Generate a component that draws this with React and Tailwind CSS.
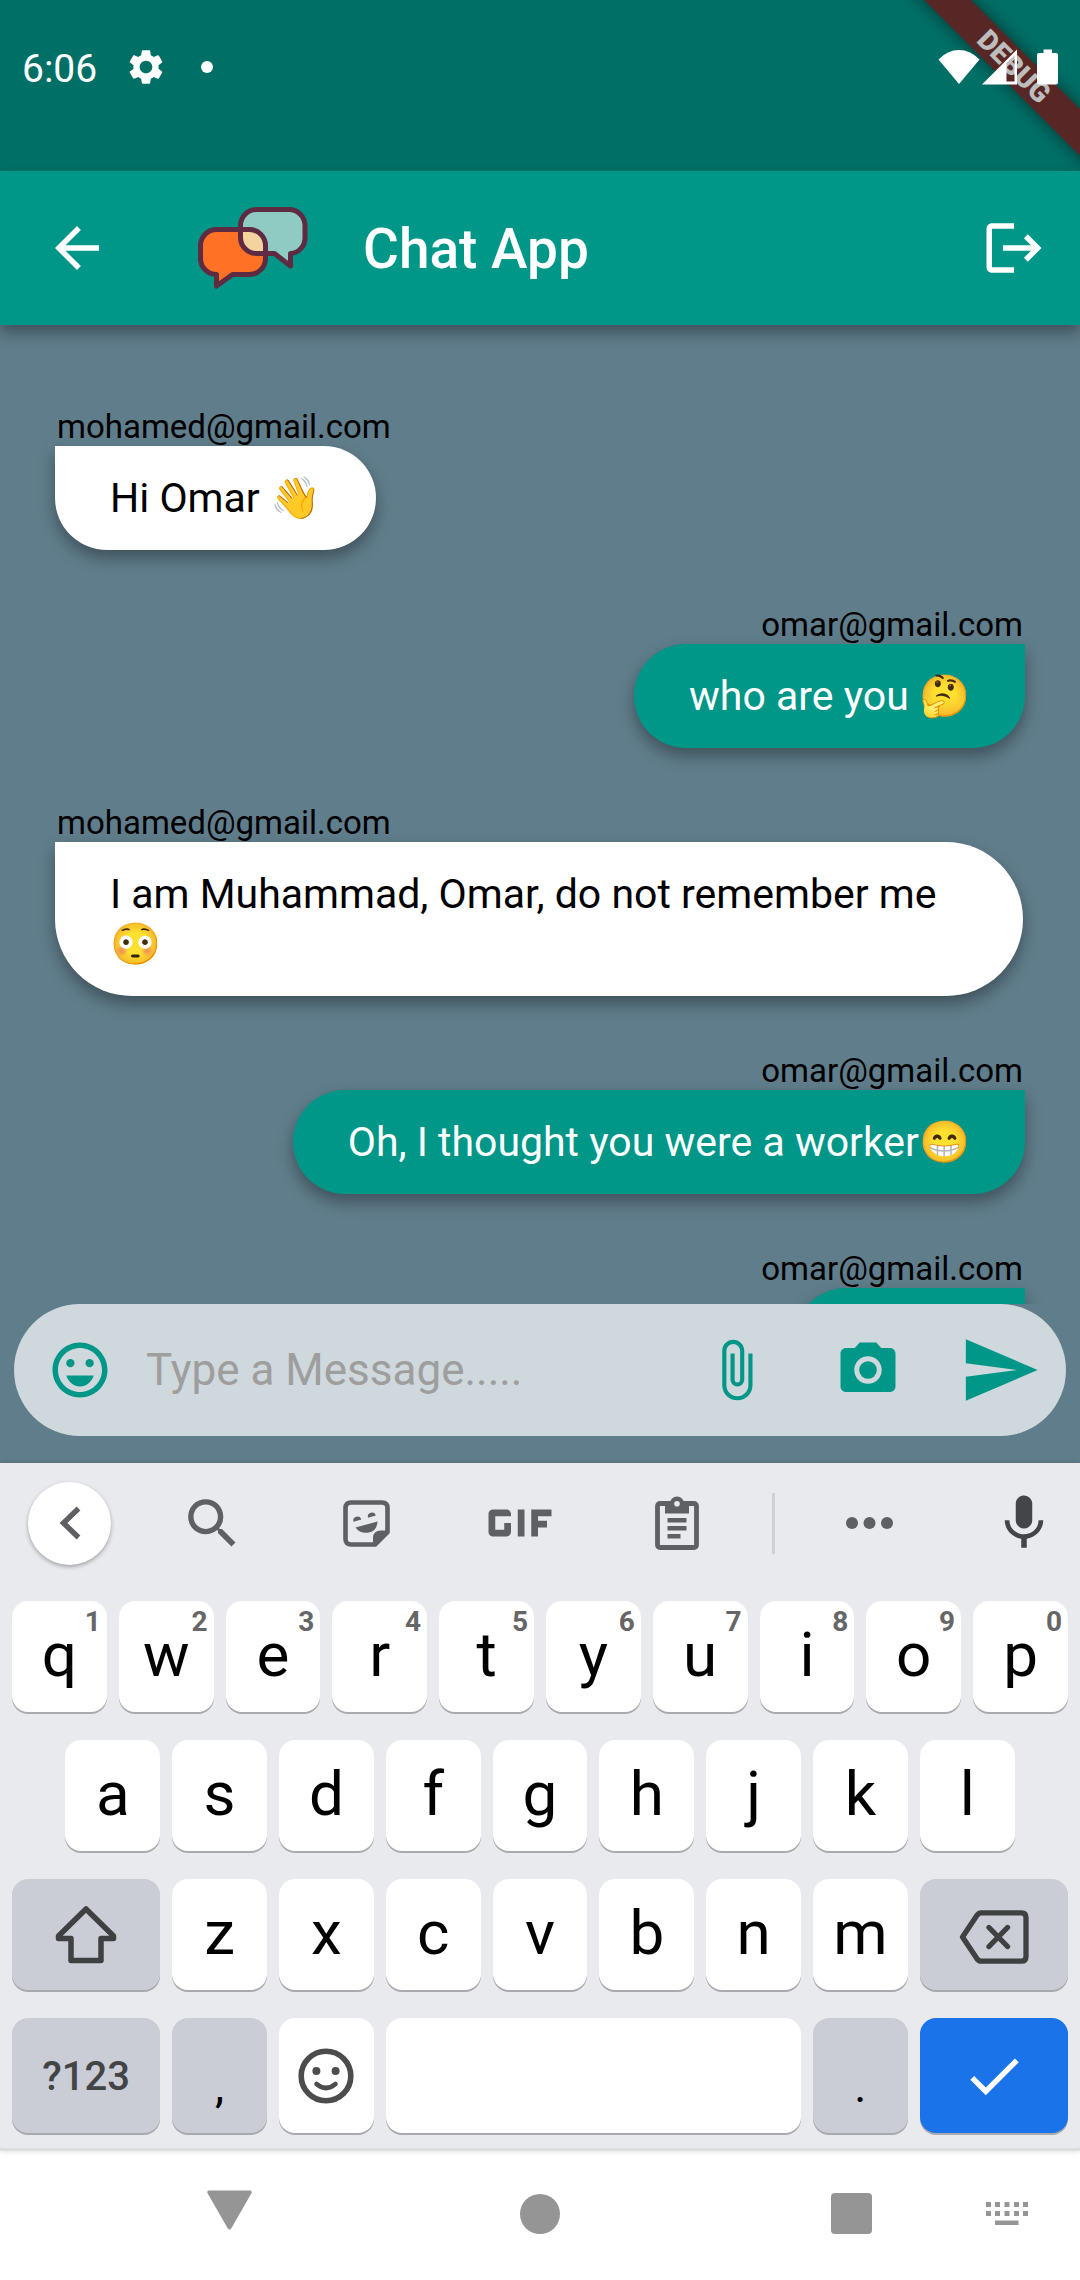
import React from "react";
import {
  MdArrowBack,
  MdAttachFile,
  MdDone,
  MdGif,
  MdLogout,
  MdMic,
  MdOutlineEmojiEmotions,
  MdPhotoCamera,
  MdSearch,
  MdSend,
  MdSettings,
} from "react-icons/md";

const MESSAGES = [
  { id: 1, from: "mohamed@gmail.com", text: "Hi Omar 👋", mine: false },
  { id: 2, from: "omar@gmail.com", text: "who are you 🤔", mine: true },
  { id: 3, from: "mohamed@gmail.com", text: "I am Muhammad, Omar, do not remember me 😳", mine: false },
  { id: 4, from: "omar@gmail.com", text: "Oh, I thought you were a worker😁", mine: true },
  { id: 5, from: "omar@gmail.com", text: "", mine: true },
];

const ROW_1 = ["q", "w", "e", "r", "t", "y", "u", "i", "o", "p"];
const ROW_2 = ["a", "s", "d", "f", "g", "h", "j", "k", "l"];
const ROW_3 = ["z", "x", "c", "v", "b", "n", "m"];

function StatusBar() {
  return (
    <div className="relative h-[171px] shrink-0 overflow-hidden bg-[#007066]">
      <div className="absolute -right-[86px] top-[50px] flex h-[33px] w-[304px] rotate-45 items-center justify-center bg-[#582725] text-[28px] font-black leading-[33px] text-[#bdbdbd] shadow-[0_0_18px_rgba(0,0,0,0.55)]">
        DEBUG
      </div>
      <div className="relative flex h-[134px] items-center pl-[22px] pr-[22px] text-white">
        <span className="pt-1 text-[39px] leading-none">6:06</span>
        <MdSettings className="ml-[28px] size-[42px]" />
        <span className="ml-[34px] size-3 rounded-full bg-white" />
        <svg className="ml-auto h-[36px] w-[42px]" viewBox="0 0 42 36" fill="currentColor">
          <path d="M21 35 0.5 10.5Q9.5 1 21 1t20.500 9.500z" />
        </svg>
        <svg className="ml-[2px] h-[36px] w-[36px]" viewBox="0 0 36 36" fill="none">
          <path d="M0 35.500 35 0.500V35.500z M24.500 14V32.500H32.500V6.500z" fill="currentColor" fillRule="evenodd" />
        </svg>
        <svg className="ml-[19px] h-[36px] w-[21px]" viewBox="0 0 21 36" fill="currentColor">
          <path d="M6.500 0.500h8.500v3.500h4q2 0 2 2v27.500q0 2-2 2H2q-2 0-2-2V6q0-2 2-2h4.500z" />
        </svg>
      </div>
    </div>
  );
}

const BACK_BUBBLE =
  "M58.500 2.500H91a16 16 0 0 1 16 16V31a15.500 15.500 0 0 1-14.500 15.500V59L76.500 46.500H58.500a16 16 0 0 1-16-16V18.500a16 16 0 0 1 16-16z";
const FRONT_BUBBLE =
  "M18.500 22.500H51.500a16 16 0 0 1 16 16V51.500a16 16 0 0 1-16 16H34.500L18.500 79V67.500A16 16 0 0 1 2.500 51.500V38.500a16 16 0 0 1 16-16z";

function Logo() {
  return (
    <svg className="h-[82px] w-[110px]" viewBox="0 0 110 82" fill="none" aria-hidden="true">
      <clipPath id="overlap">
        <path d={BACK_BUBBLE} />
      </clipPath>
      <path d={BACK_BUBBLE} fill="#8fcac3" />
      <path d={FRONT_BUBBLE} fill="#ff7226" />
      <path d={FRONT_BUBBLE} fill="#f3d49f" clipPath="url(#overlap)" />
      <path d={BACK_BUBBLE} stroke="#5f2b43" strokeWidth="5" strokeLinejoin="round" />
      <path d={FRONT_BUBBLE} stroke="#5f2b43" strokeWidth="5" strokeLinejoin="round" />
    </svg>
  );
}

function AppBar() {
  return (
    <header className="relative z-10 flex h-[154px] shrink-0 items-center bg-[#009688] pl-[44px] pr-[33px] text-white shadow-[0_8px_14px_rgba(0,0,0,0.35)]">
      <button type="button" aria-label="Back">
        <MdArrowBack className="size-[66px]" />
      </button>
      <div className="ml-[88px]">
        <Logo />
      </div>
      <h1 className="ml-[55px] pt-[3px] text-[55px] font-medium leading-none">Chat App</h1>
      <button type="button" aria-label="Log out" className="ml-auto">
        <MdLogout className="size-[66px]" />
      </button>
    </header>
  );
}

function Message({ from, text, mine }) {
  return (
    <li className={mine ? "flex flex-col items-end" : "flex flex-col items-start pr-0.5"}>
      <span className="px-0.5 text-[33px] leading-[39px] text-black">{from}</span>
      <p
        className={
          "min-h-[104px] min-w-[231px] px-[55px] py-[27px] text-[41px] leading-[50px] shadow-[0_8px_16px_rgba(0,0,0,0.35)] " +
          (mine
            ? "rounded-l-[82px] rounded-br-[82px] bg-[#009688] text-white"
            : "rounded-r-[82px] rounded-bl-[82px] bg-white text-black")
        }
      >
        {text}
      </p>
    </li>
  );
}

function Composer() {
  return (
    <form
      className="mx-[14px] mb-[27px] flex h-[132px] shrink-0 items-center rounded-full bg-[#cfd8dc] pl-[33px] pr-[25px] text-[#009688]"
      onSubmit={(e) => e.preventDefault()}
    >
      <button type="button" aria-label="Emoji">
        <MdOutlineEmojiEmotions className="size-[66px]" />
      </button>
      <input
        type="text"
        aria-label="Message"
        placeholder="Type a Message....."
        className="ml-[33px] min-w-0 flex-1 bg-transparent text-[44px] leading-[52px] text-black outline-none placeholder:text-[#9e9e9e]"
      />
      <button type="button" aria-label="Attach a file">
        <MdAttachFile className="size-[66px]" />
      </button>
      <button type="button" aria-label="Camera" className="ml-[66px]">
        <MdPhotoCamera className="size-[66px]" />
      </button>
      <button type="submit" aria-label="Send" className="ml-[58px]">
        <MdSend className="size-[82px]" />
      </button>
    </form>
  );
}

function StickerIcon() {
  return (
    <svg className="h-[47px] w-[47px]" viewBox="0 0 47 47" fill="none">
      <path
        d="M8 2.500H39Q44.500 2.500 44.500 8V32L32 44.500H8Q2.500 44.500 2.500 39V8Q2.500 2.500 8 2.500z"
        stroke="currentColor"
        strokeWidth="4.600"
        strokeLinejoin="round"
      />
      <path d="M30 45V38Q30 30.500 38 30.500H45V33L33 45z" fill="currentColor" />
      <path d="M10.500 21.800a4 4 0 1 1 7.800-2.200zM25 17.800a4 4 0 1 1 7.800-2.200z" fill="currentColor" />
      <path d="M12.500 27.500 34.500 21.500Q34 31 26 32.500Q17 34 12.500 27.500z" fill="currentColor" />
    </svg>
  );
}

function ClipboardIcon() {
  return (
    <svg className="h-[54px] w-[44px]" viewBox="0 0 44 54" fill="none">
      <rect x="2.500" y="7.500" width="39" height="44" rx="2.500" stroke="currentColor" strokeWidth="4.800" />
      <path d="M10 6H34V17.500H10z" fill="currentColor" />
      <circle cx="22" cy="7.500" r="7" fill="currentColor" />
      <circle cx="22" cy="7.800" r="2.800" fill="#e8eaed" />
      <path d="M12.500 22H31.500V26.500H12.500zM12.500 30H31.500V34.500H12.500zM12.500 38H25.500V42.500H12.500z" fill="currentColor" />
    </svg>
  );
}

function Toolbar() {
  return (
    <div className="grid h-[120px] grid-cols-[139fr_147fr_160fr_147fr_167fr_26fr_166fr_128fr] place-items-center text-[#5f6063]">
      <button
        type="button"
        aria-label="Close toolbar"
        className="flex size-[83px] items-center justify-center rounded-full bg-white shadow-[0_2px_4px_rgba(0,0,0,0.3)]"
      >
        <svg className="h-[34px] w-[22px]" viewBox="0 0 22 34" fill="none">
          <path d="M19.500 2.500 4.500 17 19.500 31.500" stroke="currentColor" strokeWidth="5.400" />
        </svg>
      </button>
      <button type="button" aria-label="Search">
        <MdSearch className="size-[65px]" />
      </button>
      <button type="button" aria-label="Stickers">
        <StickerIcon />
      </button>
      <button type="button" aria-label="GIF">
        <MdGif className="size-[108px]" />
      </button>
      <button type="button" aria-label="Clipboard">
        <ClipboardIcon />
      </button>
      <span className="h-[61px] w-[3px] bg-[#cfd1d5]" />
      <button type="button" aria-label="More">
        <svg className="h-[12px] w-[47px]" viewBox="0 0 47 12" fill="currentColor">
          <circle cx="6" cy="6" r="6" />
          <circle cx="23.500" cy="6" r="6" />
          <circle cx="41" cy="6" r="6" />
        </svg>
      </button>
      <button type="button" aria-label="Voice input" className="pl-4 text-[#444548]">
        <MdMic className="size-[66px]" />
      </button>
    </div>
  );
}

const KEY = "relative flex items-center justify-center rounded-2xl shadow-[0_2px_0_#a8aaad] ";
const LETTER = "col-span-2 h-[111px] bg-white pb-1 text-[62px] leading-none text-black ";

function LetterKey({ letter, hint, start }) {
  return (
    <button type="button" className={KEY + LETTER + (start ? "col-start-2" : "")}>
      {letter}
      {hint && (
        <span className="absolute right-[6px] top-[7px] text-[28px] font-bold leading-[28px] text-[#666]">{hint}</span>
      )}
    </button>
  );
}

function Keyboard() {
  return (
    <section aria-label="Keyboard" className="relative shrink-0 border-b-[3px] border-[#dcdfe0] bg-[#e8eaed] shadow-[0_0_6px_rgba(0,0,0,0.15)]">
      <Toolbar />
      <div className="grid grid-cols-[repeat(20,minmax(0,1fr))] gap-x-3 gap-y-[28px] px-3 pb-[15px] pt-[18px]">
        {ROW_1.map((l, i) => (
          <LetterKey key={l} letter={l} hint={String((i + 1) % 10)} />
        ))}
        {ROW_2.map((l, i) => (
          <LetterKey key={l} letter={l} start={i === 0} />
        ))}
        <button type="button" aria-label="Shift" className={KEY + "col-span-3 col-start-1 h-[111px] bg-[#cacdd6] text-[#3f4042]"}>
          <svg className="h-[59px] w-[62px]" viewBox="0 0 62 59" fill="none">
            <path
              d="M31 4 3.500 31V33.500H16V55.500H46V33.500H58.500V31z"
              stroke="currentColor"
              strokeWidth="5.500"
              strokeLinejoin="round"
            />
          </svg>
        </button>
        {ROW_3.map((l) => (
          <LetterKey key={l} letter={l} />
        ))}
        <button type="button" aria-label="Backspace" className={KEY + "col-span-3 h-[111px] bg-[#cacdd6] pt-1 text-[#3f4042]"}>
          <svg className="h-[54px] w-[70px]" viewBox="0 0 70 54" fill="none" stroke="currentColor" strokeWidth="5.300">
            <path d="M3.500 27 17.500 6Q19.500 2.800 22 2.800H62.500Q67 2.800 67 7.500V46.500Q67 51.200 62.500 51.200H22Q19.500 51.200 17.500 48z" strokeLinejoin="round" />
            <path d="M30 17.500 48.500 36.500M48.500 17.500 30 36.500" strokeLinecap="round" />
          </svg>
        </button>
        <button type="button" className={KEY + "col-span-3 h-[115px] bg-[#cacdd6] pt-0.5 text-[40px] font-medium leading-none text-[#434446]"}>
          ?123
        </button>
        <button type="button" className={KEY + "col-span-2 h-[115px] bg-[#cacdd6] pt-5 text-[46px] leading-none text-black"}>
          ,
        </button>
        <button type="button" aria-label="Emoji keyboard" className={KEY + "col-span-2 h-[115px] bg-white text-[#4c4c4c]"}>
          <svg className="size-[56px]" viewBox="-28 -28 56 56" fill="none">
            <circle r="24.800" stroke="currentColor" strokeWidth="5.600" />
            <circle cx="-9.600" cy="-5" r="4" fill="currentColor" />
            <circle cx="9.600" cy="-5" r="4" fill="currentColor" />
            <path d="M-9.500 8Q0 16 9.500 8" stroke="currentColor" strokeWidth="4.600" strokeLinecap="round" />
          </svg>
        </button>
        <button type="button" aria-label="Space" className={KEY + "col-span-8 h-[115px] bg-white"} />
        <button type="button" className={KEY + "col-span-2 h-[115px] bg-[#cacdd6] pt-5 text-[46px] leading-none text-black"}>
          .
        </button>
        <button type="button" aria-label="Done" className={KEY + "col-span-3 h-[115px] bg-[#1a73e8] text-white"}>
          <MdDone className="size-[66px]" />
        </button>
      </div>
    </section>
  );
}

function NavBar() {
  return (
    <nav className="grid h-[129px] shrink-0 grid-cols-[146fr_166fr_456fr_166fr_146fr] place-items-center bg-white pb-1 text-[#959595]">
      <button type="button" aria-label="Hide keyboard" className="col-start-2 pb-2">
        <svg className="h-[40px] w-[45px]" viewBox="0 0 45 40" fill="currentColor">
          <path d="M2.500 0.500H42.500Q46 0.500 44 4L24.500 38Q22.500 41 20.500 38L1 4Q-1 0.500 2.500 0.500z" />
        </svg>
      </button>
      <button type="button" aria-label="Home" className="size-10 rounded-full bg-current" />
      <button type="button" aria-label="Recent apps" className="size-[41px] rounded bg-current" />
      <button type="button" aria-label="Choose keyboard">
        <svg className="h-[23px] w-[42px]" viewBox="0 0 42 23" fill="currentColor">
          <path d="M0 0h5v5H0zM9 0h5v5H9zM18.500 0h5v5h-5zM28 0h5v5h-5zM37 0h5v5h-5zM0 9h5v5H0zM9 9h5v5H9zM18.500 9h5v5h-5zM28 9h5v5h-5zM37 9h5v5h-5zM9 18.500h23.500V23H9z" />
        </svg>
      </button>
    </nav>
  );
}

export default function App() {
  return (
    <div className="flex h-screen flex-col bg-[#607d8b] font-[Roboto,sans-serif]">
      <StatusBar />
      <AppBar />
      <ul className="flex min-h-0 flex-1 flex-col gap-[55px] overflow-hidden px-[55px] pt-[82px]">
        {MESSAGES.map((m) => (
          <Message key={m.id} from={m.from} text={m.text} mine={m.mine} />
        ))}
      </ul>
      <Composer />
      <Keyboard />
      <NavBar />
    </div>
  );
}
